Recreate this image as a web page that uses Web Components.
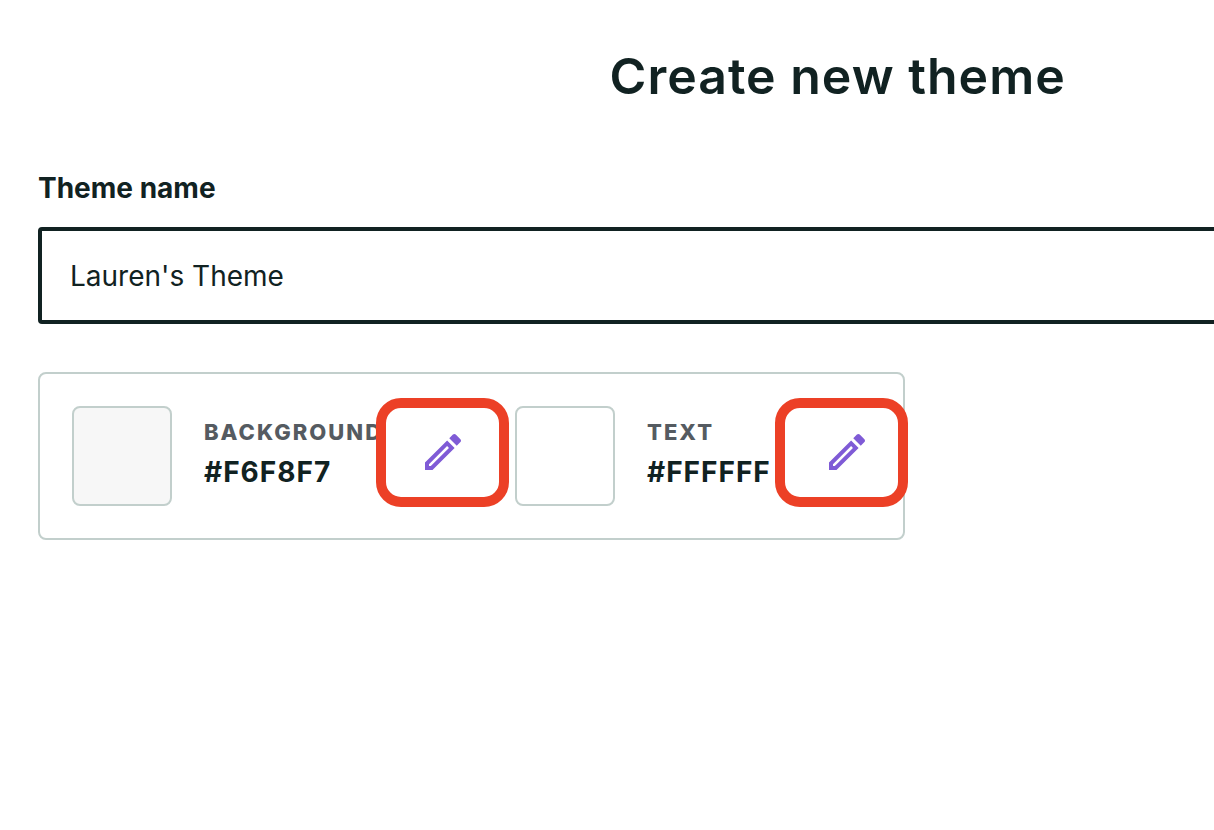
<!DOCTYPE html>
<html lang="en">
<head>
<meta charset="utf-8">
<title>Create new theme</title>
<style>
html { background: #fff; overflow: hidden; }
body { margin: 0; font-family: Inter, "Liberation Sans", sans-serif; color: #112222; }
</style>
</head>
<body>
<theme-editor></theme-editor>
<script>
class ThemeEditor extends HTMLElement {
  constructor() {
    super();
    this.attachShadow({ mode: 'open' }).innerHTML = `
      <style>
        :host { display: block; overflow: hidden; min-height: 100vh; }
        /* The editor is wider than the viewport and runs off its right edge. */
        main { box-sizing: border-box; width: 138%; padding: 44px 38px; }
        h1 { margin: 0; font-size: 50px; line-height: 64px; font-weight: 600; text-align: center; letter-spacing: 1px; }
        theme-field { margin-top: 60px; }
        palette-card { margin-top: 48px; }
      </style>
      <main>
        <h1>Create new theme</h1>
        <theme-field label="Theme name" value="Lauren's Theme"></theme-field>
        <palette-card>
          <color-item name="Background" value="#F6F8F7" swatch="#f7f7f7"></color-item>
          <color-item name="Text" value="#FFFFFF" swatch="#ffffff" compact></color-item>
        </palette-card>
      </main>`;
  }
}

class ThemeField extends HTMLElement {
  constructor() {
    super();
    this.attachShadow({ mode: 'open' }).innerHTML = `
      <style>
        :host { display: block; }
        label { display: block; font-size: 28px; line-height: 40px; font-weight: 700; }
        input { display: block; box-sizing: border-box; width: 100%; height: 97px; margin: 19px 0 0; padding: 0 28px;
          border: 4px solid #112222; border-radius: 4px; background: #fff; outline: 0;
          font: 400 28px/40px Inter, "Liberation Sans", sans-serif; color: #112222; }
      </style>
      <label for="field"></label>
      <input id="field" type="text">`;
  }
  connectedCallback() {
    this.shadowRoot.querySelector('label').textContent = this.getAttribute('label');
    this.shadowRoot.querySelector('input').value = this.getAttribute('value');
  }
}

class PaletteCard extends HTMLElement {
  constructor() {
    super();
    this.attachShadow({ mode: 'open' }).innerHTML = `
      <style>
        :host { display: flex; box-sizing: border-box; width: fit-content; gap: 48px; padding: 32px;
          border: 2px solid #c2cfcc; border-radius: 8px; }
      </style>
      <slot></slot>`;
  }
}

class ColorItem extends HTMLElement {
  constructor() {
    super();
    this.attachShadow({ mode: 'open' }).innerHTML = `
      <style>
        :host { display: flex; align-items: center; gap: 32px; --text-width: 183px; --ring-left: -43px; --ring-right: -42px; }
        :host([compact]) { --text-width: 144px; --ring-left: -48px; --ring-right: -37px; }
        .swatch { box-sizing: border-box; width: 100px; height: 100px; border: 2px solid #c2cfcc; border-radius: 8px; }
        .text { min-width: var(--text-width); padding-bottom: 8px; }
        .name { font-size: 22px; line-height: 40px; font-weight: 800; letter-spacing: 2px; text-transform: uppercase; color: #555b61; }
        .value { font-size: 28px; line-height: 40px; font-weight: 700; letter-spacing: 1px; }
        button { position: relative; display: block; padding: 0 0 8px; border: 0; background: none; color: #7f5bd6; cursor: pointer; }
        svg { display: block; width: 48px; height: 48px; fill: currentColor; }
        .ring { position: absolute; top: -30px; bottom: -23px; left: var(--ring-left); right: var(--ring-right);
          border: 10px solid #ec4026; border-radius: 25px; }
      </style>
      <div class="swatch"></div>
      <div class="text"><div class="name"></div><div class="value"></div></div>
      <button type="button">
        <svg viewBox="0 0 24 24" aria-hidden="true"><path d="M14.06 9.02l.92.92L5.92 19H5v-.92l9.06-9.06M17.66 3c-.25 0-.51.1-.7.29l-1.83 1.83 3.75 3.75 1.83-1.83c.39-.39.39-1.02 0-1.41l-2.34-2.34c-.2-.2-.45-.29-.71-.29zm-3.6 3.19L3 17.25V21h3.75L17.81 9.94l-3.75-3.75z"/></svg>
        <span class="ring"></span>
      </button>`;
  }
  connectedCallback() {
    const find = (selector) => this.shadowRoot.querySelector(selector);
    find('.swatch').style.background = this.getAttribute('swatch');
    find('.name').textContent = this.getAttribute('name');
    find('.value').textContent = this.getAttribute('value');
    find('button').setAttribute('aria-label', 'Edit ' + this.getAttribute('name'));
  }
}

customElements.define('theme-field', ThemeField);
customElements.define('palette-card', PaletteCard);
customElements.define('color-item', ColorItem);
customElements.define('theme-editor', ThemeEditor);
</script>
</body>
</html>
